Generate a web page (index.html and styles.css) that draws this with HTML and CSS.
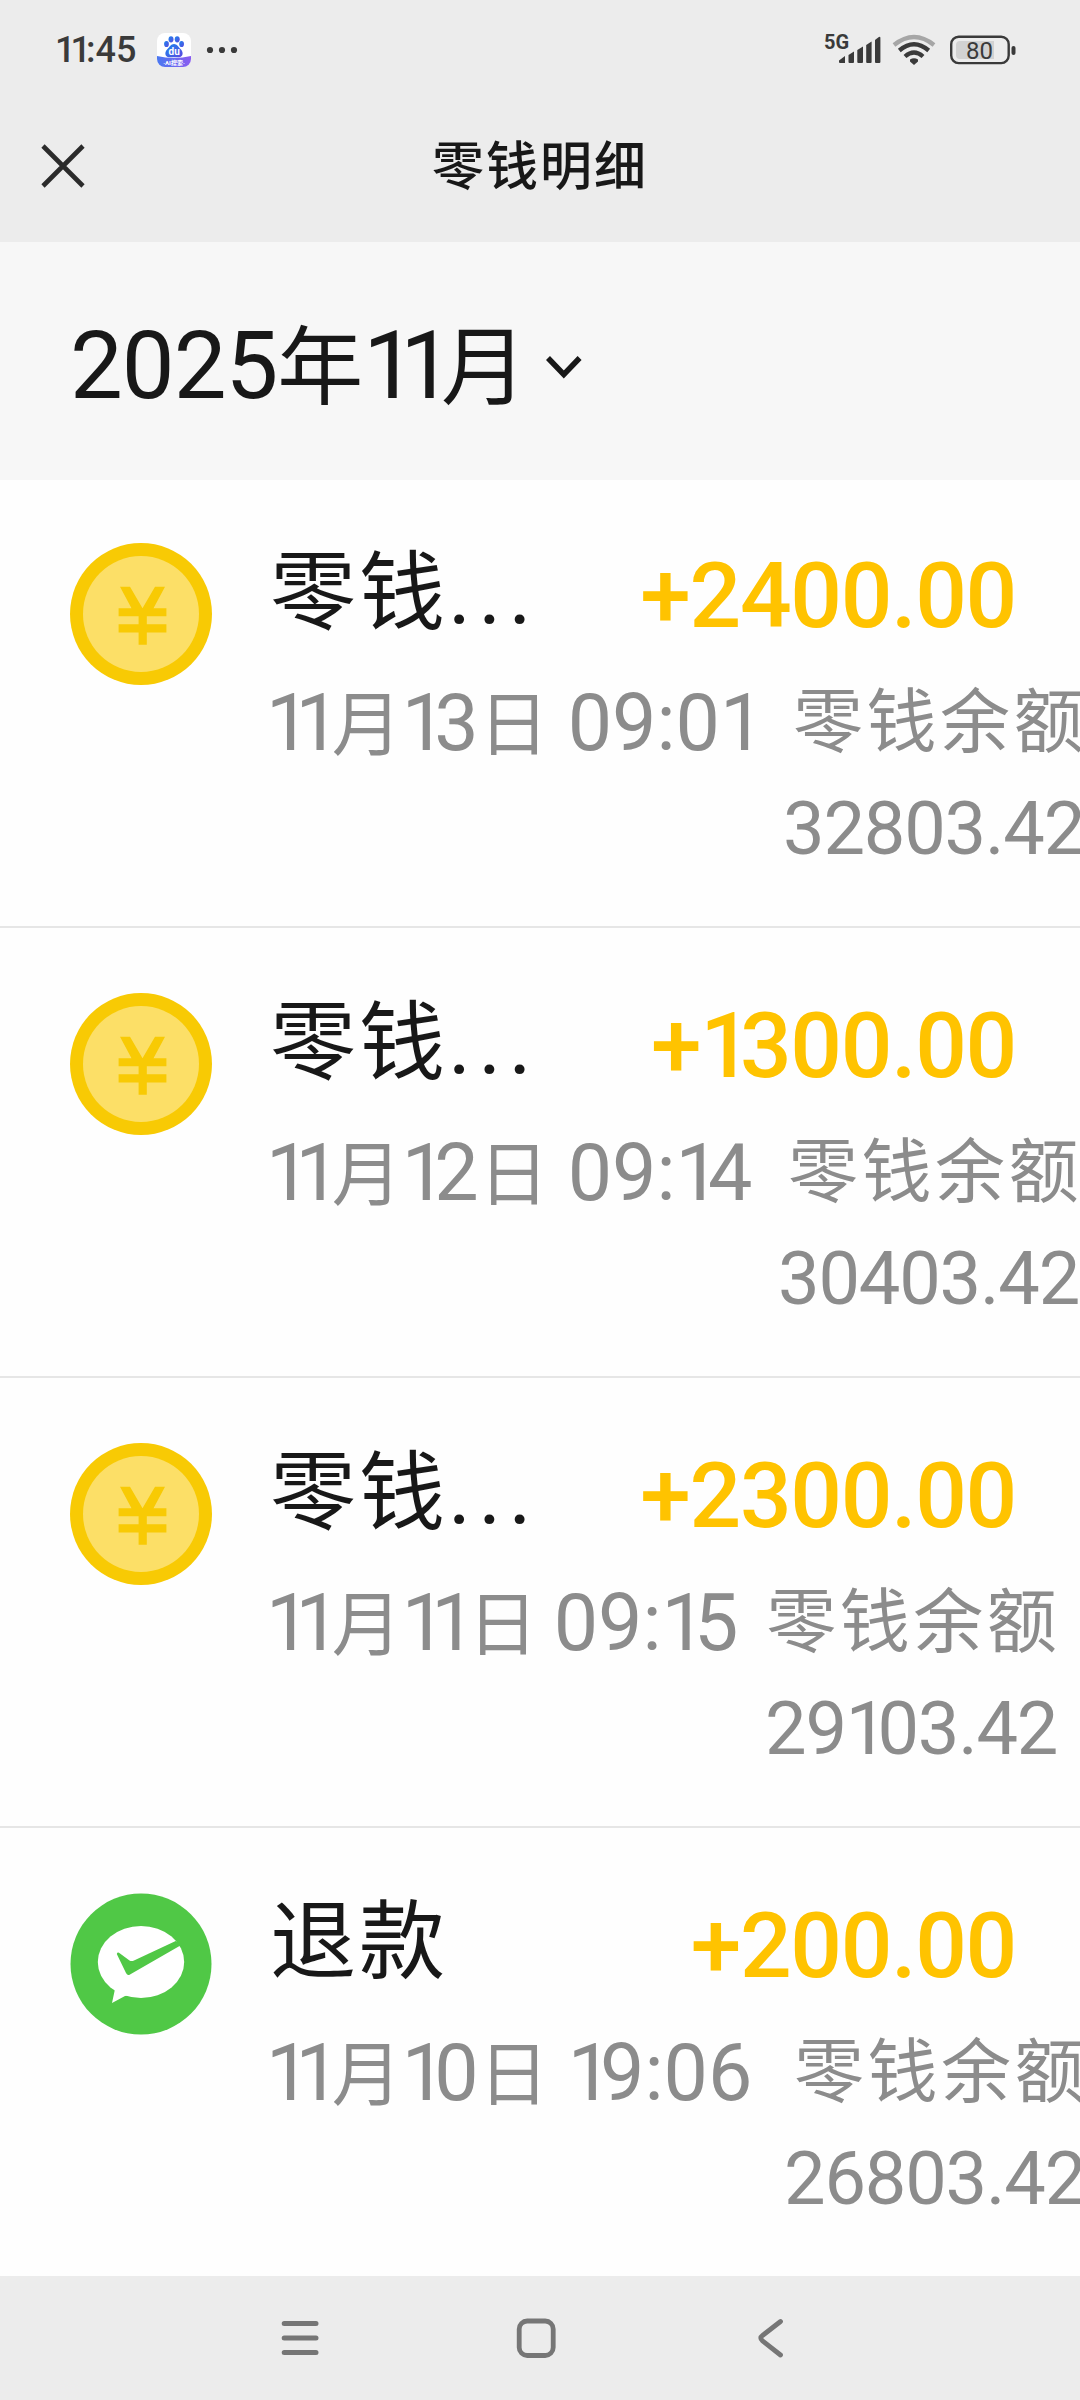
FILE: index.html
```html
<!DOCTYPE html>
<html lang="zh-CN">
<head>
    <meta charset="UTF-8">
    <meta name="viewport" content="width=device-width, initial-scale=1.0">
    <title>零钱明细</title>
    <link rel="stylesheet" href="styles.css">
</head>
<body>

    <!-- Icons shared by the list rows -->
    <svg class="defs" width="0" height="0">
        <symbol id="coin" viewBox="0 0 142 142">
            <circle cx="71" cy="71" r="71" fill="#f8ca04"/>
            <circle cx="71" cy="71" r="58" fill="#fcdf67"/>
            <path d="M50 43.7H60L72.5 65.3L85 43.7H95L83.5 65.3H96.4V73.3H76.8V81.2H96.4V89.5H76.8V101.7H68.6V89.5H48.6V81.2H68.6V73.3H48.6V65.3H61.5Z" fill="#f8ca04"/>
        </symbol>
        <symbol id="wepay" viewBox="0 0 142 142">
            <circle cx="71" cy="71" r="70.5" fill="#50c846"/>
            <ellipse cx="71" cy="69" rx="43.2" ry="36" fill="#fff"/>
            <path d="M42 110L45 96L60 102L55 103Z" fill="#fff"/>
            <path d="M46.8 61Q47.5 58.5 50 60.5L59.5 67.5Q61.5 68.5 64 67.5L105.7 48L113 51L60 81.5Q57.5 83 56 80Z" fill="#50c846"/>
        </symbol>
    </svg>

    <header class="top">
        <div class="status-bar">
            <span class="clock"><span class="ones">11</span>:45</span>
            <svg class="app-icon" viewBox="0 0 34 34">
                <defs>
                    <linearGradient id="paw" x1="0" y1="0" x2="1" y2="1">
                        <stop offset="0" stop-color="#1a86ee"/>
                        <stop offset="1" stop-color="#5a4ae0"/>
                    </linearGradient>
                    <linearGradient id="strip" x1="0" y1="0" x2="1" y2="0">
                        <stop offset="0" stop-color="#4a78f0"/>
                        <stop offset="1" stop-color="#8a5cf0"/>
                    </linearGradient>
                    <clipPath id="tile"><rect width="34" height="34" rx="8"/></clipPath>
                </defs>
                <g clip-path="url(#tile)">
                    <rect width="34" height="34" fill="#fff"/>
                    <path d="M0 23Q17 27 34 23V34H0Z" fill="url(#strip)"/>
                </g>
                <g fill="url(#paw)">
                    <ellipse cx="9.5" cy="11" rx="2.4" ry="3.1"/>
                    <ellipse cx="14" cy="6.3" rx="2.5" ry="3.1"/>
                    <ellipse cx="20.2" cy="6.3" rx="2.5" ry="3.1"/>
                    <ellipse cx="24.6" cy="11" rx="2.4" ry="3.1"/>
                    <path d="M17 11C20 11 21.5 14 23.5 16C27 19.5 26 24 22 24.2H12C8 24 7 19.5 10.5 16C12.5 14 14 11 17 11Z"/>
                </g>
                <text x="17.2" y="22" class="app-du">du</text>
                <text x="17" y="31.8" class="app-tag">·AI搜索·</text>
            </svg>
            <svg class="dots" viewBox="0 0 32 8" fill="#3a3a3a">
                <circle cx="4" cy="4" r="3.1"/>
                <circle cx="16" cy="4" r="3.1"/>
                <circle cx="28" cy="4" r="3.1"/>
            </svg>
            <svg class="signal" viewBox="0 0 58 34" fill="#3a3a3a">
                <text x="0" y="15.5" class="signal-text">5G</text>
                <path d="M15 27.5L21 23V30H16Q15 30 15 29Z"/>
                <path d="M24.5 22L30 18.5V29Q30 30 29 30H25.5Q24.5 30 24.5 29Z"/>
                <path d="M33.3 17L39 13.5V29Q39 30 38 30H34.3Q33.3 30 33.3 29Z"/>
                <path d="M42.2 12L47.6 8.5V29Q47.6 30 46.6 30H43.2Q42.2 30 42.2 29Z"/>
                <path d="M51 7L54.5 4.2Q56.4 3 56.4 5V29Q56.4 30 55.4 30H52Q51 30 51 29Z"/>
            </svg>
            <svg class="wifi" viewBox="0 0 44 34" fill="none" stroke="#3a3a3a" stroke-width="4.3">
                <path d="M2 12Q22 -4 42 12" stroke="#a6a6a6"/>
                <path d="M7.3 17.5Q22 5 36.7 17.5"/>
                <path d="M13 23.5Q22 15.5 31 23.5"/>
                <path d="M18 26.5Q22 24 26 26.5V28.5L22 32L18 28.5Z" fill="#3a3a3a" stroke="none"/>
            </svg>
            <svg class="battery" viewBox="0 0 66 30">
                <rect x="1.2" y="1.7" width="57.5" height="26.4" rx="7.5" fill="none" stroke="#3a3a3a" stroke-width="2.4"/>
                <path d="M10 6H44V24H10Q6 24 6 20V10Q6 6 10 6Z" fill="#d2d2d2"/>
                <rect x="61.5" y="11" width="4" height="9" rx="2" fill="#3a3a3a"/>
                <text x="29.5" y="24" class="battery-text">80</text>
            </svg>
        </div>
        <div class="title-bar">
            <svg class="close" viewBox="0 0 44 44">
                <path d="M2 2L42 42M42 2L2 42" stroke="#2b2b2b" stroke-width="4.6"/>
            </svg>
            <h1>零钱明细</h1>
        </div>
    </header>

    <section class="month">
        <span><span class="num">2025</span>年<span class="num ones">11</span>月</span>
        <svg class="chevron" viewBox="0 0 36 24">
            <path d="M2 3L17.8 19.5L33.6 3" fill="none" stroke="#181818" stroke-width="5.5"/>
        </svg>
    </section>

    <main class="list">
        <div class="item row-1">
            <svg class="icon"><use href="#coin"/></svg>
            <div class="info">
                <div class="line">
                    <span class="name">零钱<span class="more">...</span></span>
                    <span class="amount">+2400.00</span>
                </div>
                <div class="detail">
                    <span class="date"><span class="num ones">11</span>月<span class="num"><span class="one">1</span>3</span>日<span class="num time">09:0<span class="one">1</span></span></span>
                    <span class="balance">零钱余额<br><span class="left">32803.42</span></span>
                </div>
            </div>
        </div>
        <div class="item row-2">
            <svg class="icon"><use href="#coin"/></svg>
            <div class="info">
                <div class="line">
                    <span class="name">零钱<span class="more">...</span></span>
                    <span class="amount">+<span class="one">1</span>300.00</span>
                </div>
                <div class="detail">
                    <span class="date"><span class="num ones">11</span>月<span class="num"><span class="one">1</span>2</span>日<span class="num time">09:<span class="one">1</span>4</span></span>
                    <span class="balance">零钱余额<br><span class="left">30403.42</span></span>
                </div>
            </div>
        </div>
        <div class="item row-3">
            <svg class="icon"><use href="#coin"/></svg>
            <div class="info">
                <div class="line">
                    <span class="name">零钱<span class="more">...</span></span>
                    <span class="amount">+2300.00</span>
                </div>
                <div class="detail">
                    <span class="date"><span class="num ones">11</span>月<span class="num ones">11</span>日<span class="num time">09:<span class="one">1</span>5</span></span>
                    <span class="balance">零钱余额<br><span class="left">29<span class="one">1</span>03.42</span></span>
                </div>
            </div>
        </div>
        <div class="item row-4">
            <svg class="icon"><use href="#wepay"/></svg>
            <div class="info">
                <div class="line">
                    <span class="name">退款</span>
                    <span class="amount">+200.00</span>
                </div>
                <div class="detail">
                    <span class="date"><span class="num ones">11</span>月<span class="num"><span class="one">1</span>0</span>日<span class="num time"><span class="one">1</span>9:06</span></span>
                    <span class="balance">零钱余额<br><span class="left">26803.42</span></span>
                </div>
            </div>
        </div>
    </main>

    <nav class="nav-bar">
        <svg viewBox="0 0 40 40" stroke="#767676" stroke-width="5" stroke-linecap="round">
            <path d="M4.2 5.5H36M4.2 20H36M4.2 34.5H36"/>
        </svg>
        <svg viewBox="0 0 40 40">
            <rect x="3.2" y="3" width="34" height="34.5" rx="8" fill="none" stroke="#767676" stroke-width="4.8"/>
        </svg>
        <svg viewBox="0 0 40 40">
            <path d="M28.5 3.5L10.5 17.5Q7 20 10.5 22.8L28.5 37" fill="none" stroke="#767676" stroke-width="4.8" stroke-linecap="round"/>
        </svg>
    </nav>

</body>
</html>
```
FILE: styles.css
```css
* {
    box-sizing: border-box;
}

body {
    margin: 0;
    width: 1080px;
    height: 2400px;
    overflow: hidden;
    background-color: #fefefe;
    color: #181818;
    font-family: Roboto, "Noto Sans CJK SC", sans-serif;
}

.defs {
    position: absolute;
}

/* Status bar and page title */
.top {
    height: 242px;
    background-color: #ececec;
}

.status-bar {
    height: 100px;
    display: flex;
    align-items: center;
    padding: 0 64px 0 55px;
}

.clock {
    width: 102px;
    font-size: 36px;
    font-weight: 500;
    color: #3a3a3a;
}

.clock .ones {
    letter-spacing: -5px;
}

.app-icon {
    width: 34px;
    height: 34px;
}

.app-du {
    font-size: 10px;
    font-weight: 700;
    fill: #fff;
    text-anchor: middle;
}

.app-tag {
    font-size: 6px;
    font-weight: 700;
    fill: #fff;
    text-anchor: middle;
}

.dots {
    width: 32px;
    height: 8px;
    margin-left: 15px;
}

.signal {
    width: 58px;
    height: 34px;
    margin-left: auto;
    overflow: visible;
}

.signal-text {
    font-size: 20px;
    font-weight: 700;
}

.wifi {
    width: 44px;
    height: 34px;
    margin-left: 10px;
}

.battery {
    width: 66px;
    height: 30px;
    margin-left: 14px;
}

.battery-text {
    font-size: 24px;
    fill: #3a3a3a;
    text-anchor: middle;
}

.title-bar {
    height: 132px;
    display: grid;
    grid-template-columns: 126px 1fr 126px;
    align-items: center;
}

.close {
    width: 44px;
    height: 44px;
    margin-left: 41px;
}

h1 {
    margin: 0 0 8px;
    font-size: 52px;
    font-weight: 500;
    letter-spacing: 2px;
    text-align: center;
}

/* Month picker */
.month {
    height: 238px;
    padding: 12px 0 0 70px;
    display: flex;
    align-items: center;
    background-color: #f7f7f7;
    font-size: 86px;
    line-height: 120px;
}

.month .num {
    font-size: 94px;
    letter-spacing: -1px;
}

.month .ones {
    letter-spacing: -16px;
    margin-right: 4px;
}

.chevron {
    width: 36px;
    height: 24px;
    margin-left: 19px;
}

/* List */
.item {
    height: 450px;
    display: flex;
    padding: 65px 0 0 70px;
    border-bottom: 2px solid #e6e6e6;
    white-space: nowrap;
}

.item:first-child {
    height: 448px;
    padding-top: 63px;
}

.item:last-child {
    height: 448px;
    border-bottom: none;
}

.icon {
    width: 142px;
    height: 142px;
    flex-shrink: 0;
}

.info {
    width: 810px;
    flex-shrink: 0;
    margin-left: 58px;
}

.line {
    height: 106px;
    display: flex;
    justify-content: space-between;
    padding-right: 64px;
    line-height: 106px;
}

.name {
    margin-top: -3px;
    font-size: 86px;
    letter-spacing: 3px;
}

.more {
    font-size: 88px;
    letter-spacing: 7px;
}

.amount {
    font-size: 91px;
    font-weight: 500;
    color: #ffc300;
    letter-spacing: -1.3px;
}

.amount .one {
    letter-spacing: -12px;
}

.detail {
    display: flex;
    margin-top: 21px;
    color: #8c8c8c;
    font-size: 70px;
    line-height: 106px;
}

.date {
    width: 517px;
    flex-shrink: 0;
    margin-left: -4px;
}

.date .num {
    font-size: 79px;
}

.date .ones {
    letter-spacing: -15px;
    margin-right: 7px;
}

.date .one {
    letter-spacing: -12px;
}

.date .time {
    margin-left: 19px;
}

.balance {
    text-align: right;
    letter-spacing: 3.5px;
}

.left {
    margin-right: 3px;
    font-size: 74px;
    letter-spacing: -1.2px;
}

.left .one {
    letter-spacing: -10px;
}

.row-2 .date {
    width: 512px;
}

.row-3 .date {
    width: 499px;
}

.row-3 .time {
    margin-left: 16px;
}

.row-4 .date {
    width: 518px;
}

/* System navigation */
.nav-bar {
    height: 124px;
    display: flex;
    align-items: center;
    padding-left: 280px;
    gap: 196px;
    background-color: #ececec;
}

.nav-bar svg {
    width: 40px;
    height: 40px;
}
```
